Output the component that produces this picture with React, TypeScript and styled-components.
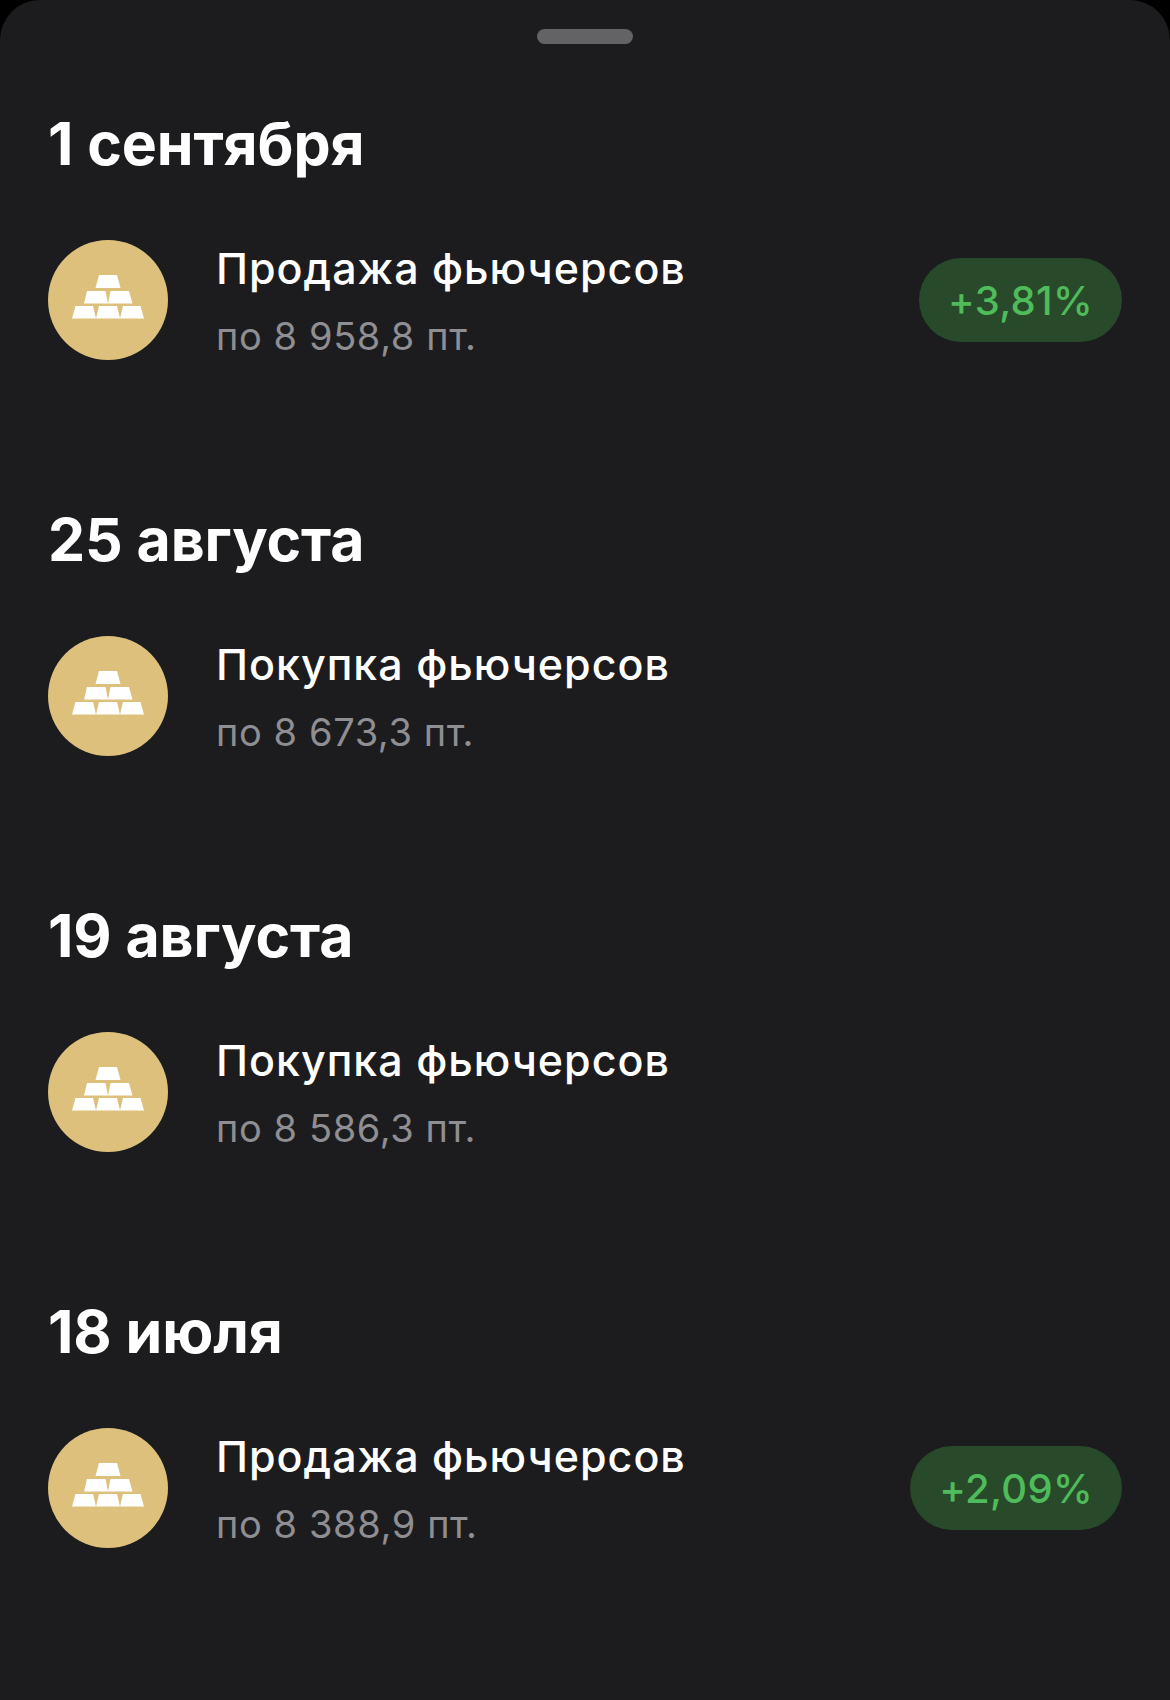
import React from 'react';
import styled, { createGlobalStyle } from 'styled-components';

const GlobalStyle = createGlobalStyle`
  html, body {
    margin: 0;
    padding: 0;
    background: #000;
  }
`;

const Sheet = styled.div`
  width: 1170px;
  height: 1700px;
  box-sizing: border-box;
  background: #1c1c1e;
  border-radius: 40px 40px 0 0;
  padding: 29px 48px 0;
  font-family: Inter, "Liberation Sans", sans-serif;
  overflow: hidden;
`;

const Handle = styled.div`
  width: 96px;
  height: 15px;
  margin: 0 auto 65px;
  border-radius: 8px;
  background: #636366;
`;

const Section = styled.section`
  height: 396px;
`;

const DateTitle = styled.h2`
  margin: 0 0 61px;
  height: 70px;
  font-size: 59px;
  line-height: 70px;
  font-weight: 700;
  letter-spacing: -0.1px;
  color: #fff;
`;

const Row = styled.div`
  display: flex;
  align-items: center;
  height: 120px;
`;

const Avatar = styled.div`
  flex: none;
  width: 120px;
  height: 120px;
  border-radius: 50%;
  background: #dcc07c;
  display: flex;
  align-items: center;
  justify-content: center;

  svg {
    margin-top: -6px;
  }
`;

const Info = styled.div`
  flex: 1;
  margin-left: 48px;
`;

const Title = styled.div`
  font-size: 43px;
  line-height: 50px;
  font-weight: 500;
  letter-spacing: 1px;
  color: #fff;
`;

const Subtitle = styled.div`
  margin-top: 21px;
  font-size: 38px;
  line-height: 44px;
  letter-spacing: 0.6px;
  color: #8e8e93;
`;

const Pill = styled.div`
  flex: none;
  height: 84px;
  padding: 0 29px;
  border-radius: 42px;
  background: #284a2a;
  color: #4fbb5a;
  font-size: 40px;
  font-weight: 500;
  letter-spacing: 0.3px;
  display: flex;
  align-items: center;
`;

const GoldIcon = () => (
  <svg width="72" height="44" viewBox="0 0 72 44" fill="#fff">
    <path d="M27 0h18l3.5 13h-25z" />
    <path d="M15 16h18.5l2.5 12.5H12z" />
    <path d="M38.5 16H57l3.5 12.5H36z" />
    <path d="M3.5 31H21l3 12.5H0z" />
    <path d="M27 31h18l3 12.5H24z" />
    <path d="M51 31h17.5l3.5 12.5H48z" />
  </svg>
);

const items = [
  { date: '1 сентября', title: 'Продажа фьючерсов', price: 'по 8 958,8 пт.', percent: '+3,81%' },
  { date: '25 августа', title: 'Покупка фьючерсов', price: 'по 8 673,3 пт.' },
  { date: '19 августа', title: 'Покупка фьючерсов', price: 'по 8 586,3 пт.' },
  { date: '18 июля', title: 'Продажа фьючерсов', price: 'по 8 388,9 пт.', percent: '+2,09%' },
];

const App: React.FC = () => (
  <>
    <GlobalStyle />
    <Sheet>
      <Handle />
      {items.map((item) => (
        <Section key={item.date}>
          <DateTitle>{item.date}</DateTitle>
          <Row>
            <Avatar>
              <GoldIcon />
            </Avatar>
            <Info>
              <Title>{item.title}</Title>
              <Subtitle>{item.price}</Subtitle>
            </Info>
            {item.percent && <Pill>{item.percent}</Pill>}
          </Row>
        </Section>
      ))}
    </Sheet>
  </>
);

export default App;
